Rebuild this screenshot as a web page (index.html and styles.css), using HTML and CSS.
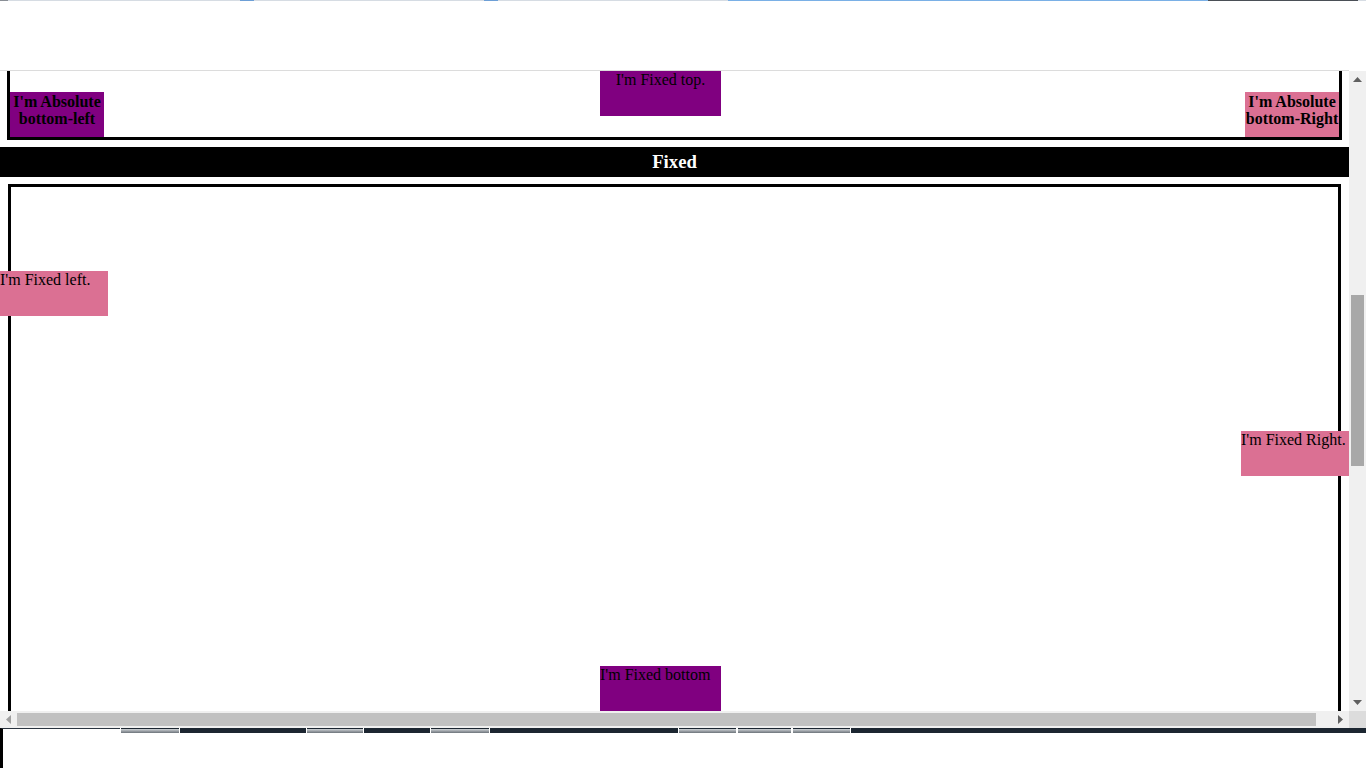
FILE: index.html
```html
<!DOCTYPE html>
<html>
<head>
<meta charset="utf-8">
<link rel="stylesheet" href="styles.css">
</head>
<body>
<div class="screen">
  <div class="topstrip">
    <span class="ts ts-a"></span><span class="ts ts-b"></span><span class="ts ts-c"></span><span class="ts ts-d"></span><span class="ts ts-e"></span>
  </div>
  <div class="toparea"></div>
  <div class="frame">
    <div class="viewport">
      <div class="page">
        <div class="box box-top">
          <div class="abs abs-left">I'm Absolute bottom-left</div>
          <div class="abs abs-right">I'm Absolute bottom-Right</div>
        </div>
        <h3 class="bar">Fixed</h3>
        <div class="box box-main"></div>
      </div>
      <div class="fixed fixed-top">I'm Fixed top.</div>
      <div class="fixed fixed-left">I'm Fixed left.</div>
      <div class="fixed fixed-right">I'm Fixed Right.</div>
      <div class="fixed fixed-bottom">I'm Fixed bottom</div>
    </div>
    <div class="vscroll">
      <div class="arrow-btn"><svg width="9" height="5" viewBox="0 0 9 5"><path d="M0 5 L4.5 0 L9 5 Z" fill="#606060"/></svg></div>
      <div class="vtrack"><div class="vthumb"></div></div>
      <div class="arrow-btn"><svg width="9" height="5" viewBox="0 0 9 5"><path d="M0 0 L9 0 L4.5 5 Z" fill="#606060"/></svg></div>
    </div>
  </div>
  <div class="hbar">
    <div class="hscroll">
      <div class="harrow"><svg width="5" height="9" viewBox="0 0 5 9"><path d="M5 0 L5 9 L0 4.5 Z" fill="#a0a0a0"/></svg></div>
      <div class="htrack"><div class="hthumb"></div></div>
      <div class="harrow"><svg width="5" height="9" viewBox="0 0 5 9"><path d="M0 0 L5 4.5 L0 9 Z" fill="#606060"/></svg></div>
    </div>
    <div class="corner"></div>
  </div>
  <div class="taskbar">
    <span class="tb-gap"></span>
    <span class="tb-btn tb-w1"></span>
    <span class="tb-dark tb-w2"></span>
    <span class="tb-btn tb-w3"></span>
    <span class="tb-dark tb-w4"></span>
    <span class="tb-btn tb-w5"></span>
    <span class="tb-dark tb-w6"></span>
    <span class="tb-btn tb-w7"></span>
    <span class="tb-btn tb-w8"></span>
    <span class="tb-btn tb-w9"></span>
    <span class="tb-dark tb-rest"></span>
  </div>
  <div class="bottomarea"><span class="bline"></span></div>
</div>
</body>
</html>
```

FILE: styles.css
```css
html, body {
  margin: 0;
  padding: 0;
  background: #ffffff;
}
.screen {
  width: 1366px;
  height: 768px;
  display: flex;
  flex-direction: column;
  overflow: hidden;
  font-family: "Liberation Serif", "Times New Roman", serif;
  font-size: 16px;
}
.topstrip {
  height: 1px;
  display: flex;
  background: #d6dce3;
}
.ts { display: block; height: 1px; }
.ts-a { width: 8px; background: #8a8f96; }
.ts-b { margin-left: 232px; width: 14px; background: #6d9fd6; }
.ts-c { margin-left: 230px; width: 14px; background: #6d9fd6; }
.ts-d { margin-left: 230px; width: 480px; background: #7ab0e6; }
.ts-e { width: 150px; background: #4a4f56; }
.toparea {
  height: 69px;
  border-bottom: 1px solid #dcdcdc;
  width: 1349px;
}
.frame {
  height: 640px;
  display: flex;
}
.viewport {
  position: relative;
  width: 1349px;
  height: 640px;
  overflow: hidden;
}
.page {
  display: flex;
  flex-direction: column;
}
.box {
  margin: 0 8px;
  border: 3px solid #000;
  position: relative;
}
.box-top {
  margin: -30px 7px 0;
  height: 93px;
}
.abs {
  position: absolute;
  bottom: 0;
  width: 94px;
  height: 45px;
  box-sizing: border-box;
  padding-top: 1px;
  font-weight: bold;
  text-align: center;
  line-height: 17px;
  color: #000;
}
.abs-left { left: 0; background: #800080; }
.abs-right { right: 0; background: #db7093; }
.bar {
  margin: 7px 0 7px;
  height: 30px;
  background: #000;
  color: #fff;
  font-size: 18.72px;
  font-weight: bold;
  text-align: center;
  line-height: 30px;
}
.box-main {
  height: 700px;
}
.fixed {
  position: absolute;
  height: 45px;
  line-height: 18px;
  color: #000;
}
.fixed-top {
  left: 600px;
  top: 0;
  width: 121px;
  background: #800080;
  text-align: center;
}
.fixed-left {
  left: 0;
  top: 200px;
  width: 108px;
  background: #db7093;
}
.fixed-right {
  right: 0;
  top: 360px;
  width: 108px;
  background: #db7093;
}
.fixed-bottom {
  left: 600px;
  bottom: 0;
  width: 121px;
  background: #800080;
}
.vscroll {
  width: 17px;
  background: #f0f0f0;
  display: flex;
  flex-direction: column;
}
.arrow-btn {
  height: 17px;
  display: flex;
  align-items: center;
  justify-content: center;
}
.vtrack {
  flex: 1;
  padding-top: 207px;
}
.vthumb {
  margin: 0 2px;
  height: 171px;
  background: #a8a8a8;
}
.hbar {
  height: 17px;
  display: flex;
}
.hscroll {
  width: 1349px;
  background: #f0f0f0;
  display: flex;
  align-items: center;
}
.harrow {
  width: 17px;
  height: 17px;
  display: flex;
  align-items: center;
  justify-content: center;
}
.htrack {
  flex: 1;
  height: 13px;
  display: flex;
}
.hthumb {
  width: 1299px;
  background: #c1c1c1;
}
.corner {
  width: 17px;
  background: #dcdcdc;
}
.taskbar {
  height: 5px;
  display: flex;
}
.taskbar span { display: block; height: 5px; }
.tb-gap { width: 120px; background: #fff; border-left: 3px solid #000; box-sizing: border-box; border-top: 1px solid #2a3440; }
.tb-btn { background: linear-gradient(#d0d4d8, #6c737a); margin: 0 1px; border-top: 1px solid #1c2631; box-sizing: border-box; }
.tb-dark { background: #1c2631; }
.tb-w1 { width: 58px; }
.tb-w2 { width: 126px; }
.tb-w3 { width: 56px; }
.tb-w4 { width: 66px; }
.tb-w5 { width: 58px; }
.tb-w6 { width: 188px; }
.tb-w7 { width: 57px; }
.tb-w8 { width: 53px; }
.tb-w9 { width: 57px; }
.tb-rest { flex: 1; }
.bottomarea {
  flex: 1;
  display: flex;
}
.bline {
  width: 3px;
  background: #000;
}
```
